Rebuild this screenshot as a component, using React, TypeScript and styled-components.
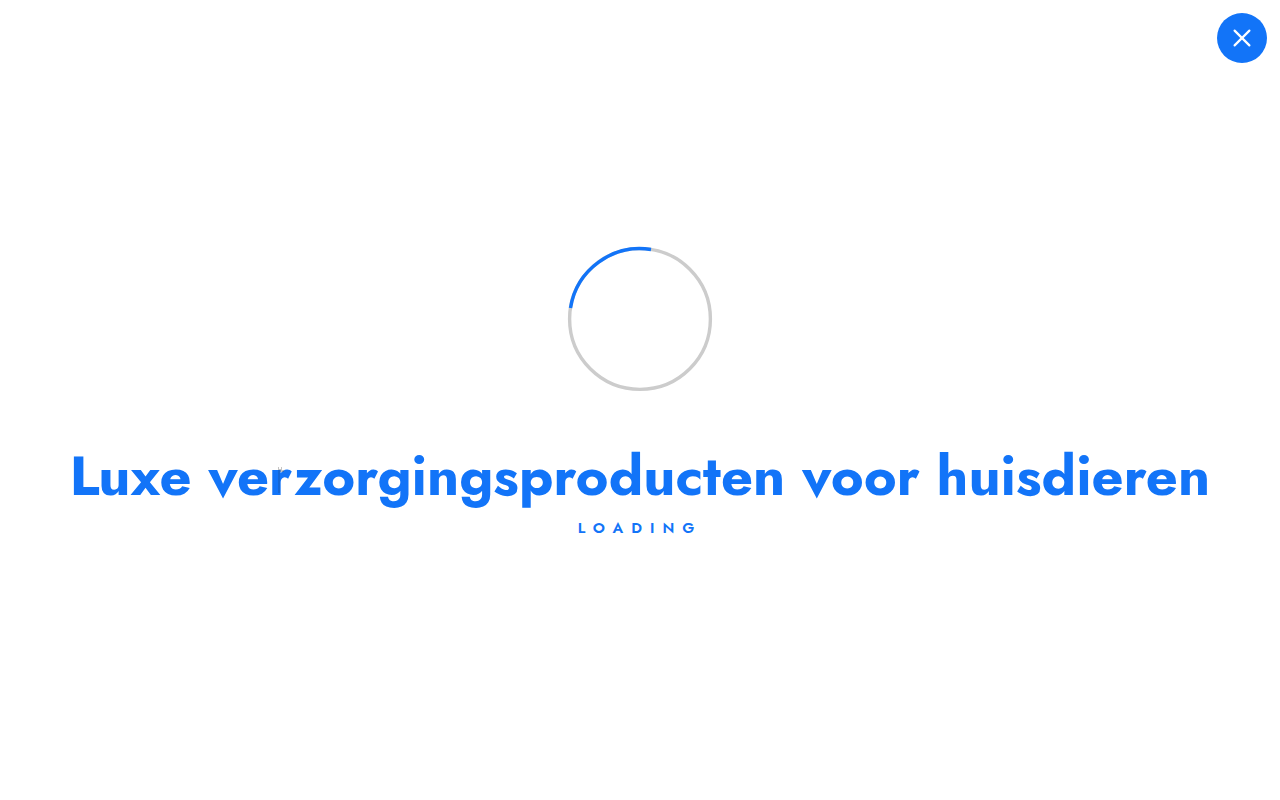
import React from 'react';
import styled, { createGlobalStyle } from 'styled-components';

const blue = '#1274f8';

const GlobalStyle = createGlobalStyle`
  *, *::before, *::after { box-sizing: border-box; }
  body { margin: 0; background: #fff; }
`;

const Preloader = styled.main`
  position: relative;
  display: flex;
  flex-direction: column;
  align-items: center;
  justify-content: center;
  min-height: 100vh;
  padding: 0 16px 14px;
  color: ${blue};
  font-family: Jost, Lato, sans-serif;
  text-align: center;
`;

const CloseButton = styled.button`
  position: absolute;
  top: 13px;
  right: 13px;
  display: grid;
  place-items: center;
  width: 50px;
  height: 50px;
  padding: 0;
  border: 0;
  border-radius: 50%;
  background: ${blue};
  color: #fff;
  cursor: pointer;
`;

const Spinner = styled.svg`
  display: block;
  width: 144px;
  height: 144px;
  margin-bottom: 48px;
  overflow: visible;
  fill: none;
  stroke-width: 3.4;
`;

const Title = styled.h1`
  position: relative;
  margin: 0;
  font-size: 56px;
  font-weight: 700;
  line-height: 74px;
`;

const Mark = styled.svg`
  position: absolute;
  top: 28px;
  left: 208px;
`;

const Status = styled.p`
  margin: 4px 0 0;
  font-size: 15px;
  font-weight: 600;
  line-height: 22px;
  letter-spacing: 8px;
`;

export default function App() {
  return (
    <>
      <GlobalStyle />
      <Preloader>
        <CloseButton type="button" aria-label="Sluiten">
          <svg width="18" height="18" viewBox="0 0 18 18" fill="none" stroke="currentColor" strokeWidth="2.2" strokeLinecap="round" aria-hidden="true">
            <path d="M1.6 1.6l14.8 14.8M16.4 1.6l-14.8 14.8" />
          </svg>
        </CloseButton>
        <Spinner viewBox="0 0 144 144" aria-hidden="true">
          <circle cx="72" cy="72" r="70.4" stroke="#ccc" />
          <path d="M2.5 61A70.4 70.4 0 0 1 83 2.5" stroke={blue} />
        </Spinner>
        <Title>
          Luxe verzorgingsproducten voor huisdieren
          <Mark width="8" height="26" viewBox="0 0 8 26" aria-hidden="true">
            <path d="M0 0h1v2h2v-2h1v3h2v2h-4v-2h-2z" fill="#555" opacity="0.35" />
            <path d="M0 3h2v23h-2z" fill="#234" opacity="0.2" />
          </Mark>
        </Title>
        <Status role="status">LOADING</Status>
      </Preloader>
    </>
  );
}
